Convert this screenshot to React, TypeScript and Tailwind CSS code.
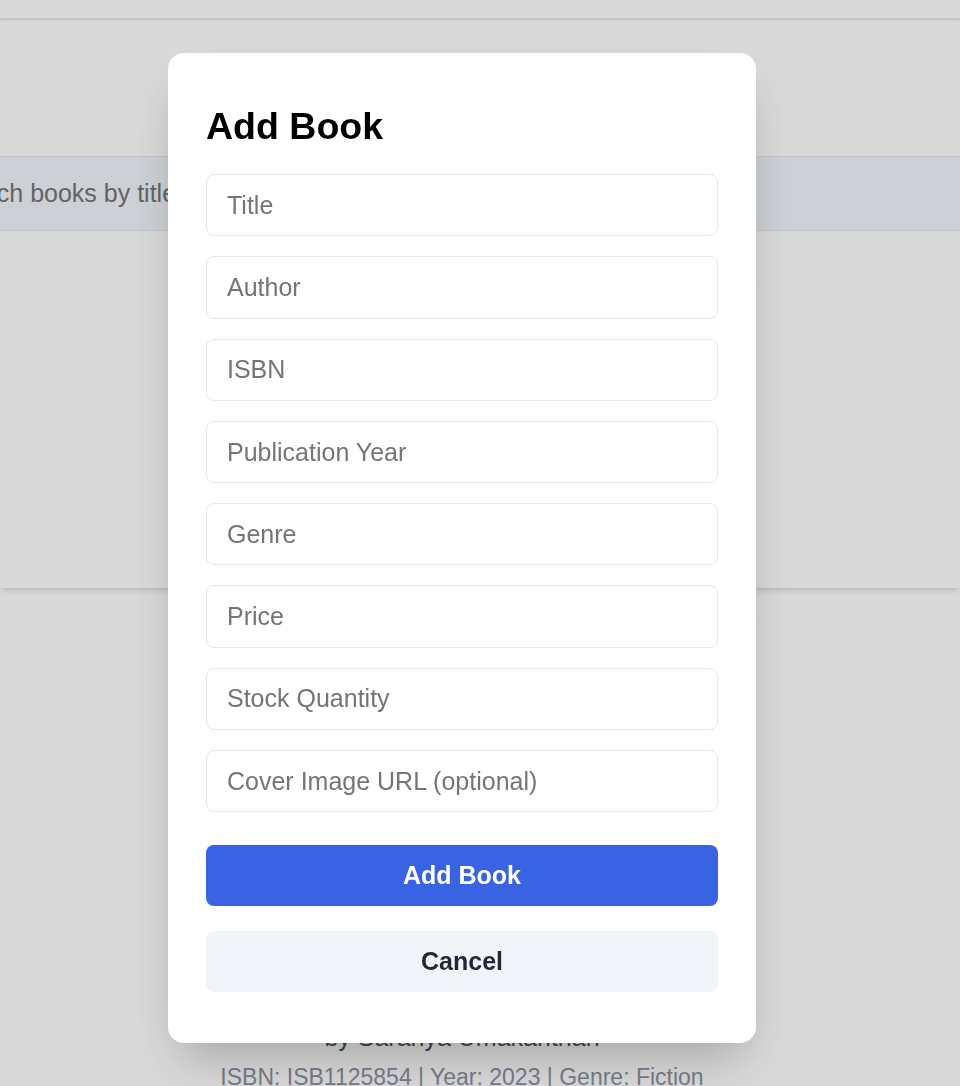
import React from "react";

const fields = [
  "Title",
  "Author",
  "ISBN",
  "Publication Year",
  "Genre",
  "Price",
  "Stock Quantity",
  "Cover Image URL (optional)",
];

const App = () => {
  return (
    <div className="relative h-[1086px] overflow-hidden bg-white font-['Liberation_Sans',Arial,sans-serif]">
      {/* page behind the dialog */}
      <header className="h-[19px] border-b border-gray-200 bg-white shadow-sm"></header>
      <section className="h-[137px]"></section>
      <div className="flex h-[75px] items-center overflow-hidden border-y border-slate-200 bg-slate-100">
        <span className="-ml-[56px] whitespace-nowrap text-[25px] text-[#757575]">
          Search books by title, author or ISBN...
        </span>
      </div>
      <div className="h-[51px]"></div>
      <div className="h-[306px] bg-white shadow-md"></div>
      <div className="h-[30px]"></div>
      <div className="flex flex-col items-center bg-white pr-[36px] shadow-md">
        <div className="mt-[40px] h-[300px] w-[200px] rounded bg-gray-100"></div>
        <div className="h-[59px]"></div>
        <p className="text-[25px] leading-[40px] text-gray-600">
          by Saranya Umakanthan
        </p>
        <p className="text-[23px] leading-[41px] text-[#8b93a2]">
          ISBN: ISB1125854 | Year: 2023 | Genre: Fiction
        </p>
      </div>

      {/* dialog */}
      <div className="fixed inset-0 flex items-start justify-center bg-black/15 pr-[36px] pt-[53px]">
        <div className="w-[588px] rounded-2xl bg-white px-[38px] py-[51px] shadow-2xl">
          <h2 className="mb-[25px] text-[37.5px] font-bold leading-[45px] text-black">
            Add Book
          </h2>
          <div className="flex flex-col gap-5">
            {fields.map((f) => (
              <input
                key={f}
                placeholder={f}
                className="h-[62.3px] w-full rounded-lg border border-[#e5e7eb] px-5 text-[25px] text-gray-900 placeholder:text-[#757575] outline-none"
              />
            ))}
          </div>
          <button className="mt-[33px] h-[61px] w-full rounded-lg bg-[#3a63e3] text-[25px] font-bold text-white">
            Add Book
          </button>
          <button className="mt-[25px] h-[61px] w-full rounded-lg bg-[#f1f4f9] text-[25px] font-bold text-[#1f2937]">
            Cancel
          </button>
        </div>
      </div>
    </div>
  );
};

export default App;
